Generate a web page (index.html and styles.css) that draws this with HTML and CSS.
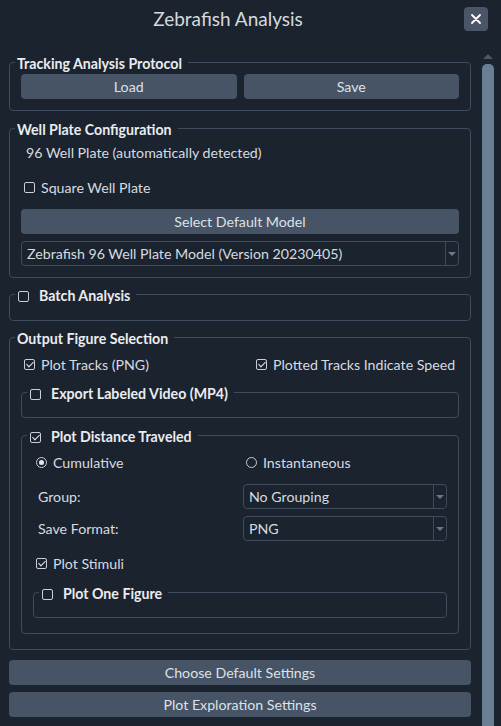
FILE: index.html
```html
<!DOCTYPE html>
<html lang="en">
<head>
  <meta charset="UTF-8">
  <meta name="viewport" content="width=device-width, initial-scale=1.0">
  <title>Zebrafish Analysis</title>
  <link rel="stylesheet" href="styles.css">
</head>
<body>
  <div class="window">
    <header class="titlebar">
      <h1>Zebrafish Analysis</h1>
      <button class="close" type="button" aria-label="Close">
        <svg width="10" height="10" viewBox="0 0 10 10"><path d="M1 1L9 9M9 1L1 9" stroke="#ffffff" stroke-width="1.8" stroke-linecap="round"/></svg>
      </button>
    </header>

    <div class="body">
      <main class="panel">
        <fieldset class="group g-protocol">
          <legend>Tracking Analysis Protocol</legend>
          <div class="btn-row">
            <button class="btn" type="button">Load</button>
            <button class="btn" type="button">Save</button>
          </div>
        </fieldset>

        <fieldset class="group g-plate">
          <legend>Well Plate Configuration</legend>
          <div class="note">96 Well Plate (automatically detected)</div>
          <label class="opt opt-square"><span class="check"></span>Square Well Plate</label>
          <button class="btn btn-wide" type="button">Select Default Model</button>
          <div class="combo combo-model">
            <span class="value">Zebrafish 96 Well Plate Model (Version 20230405)</span>
            <span class="drop"></span>
          </div>
        </fieldset>

        <fieldset class="group g-empty">
          <legend class="legend-check"><span class="check"></span>Batch Analysis</legend>
        </fieldset>

        <fieldset class="group g-output">
          <legend>Output Figure Selection</legend>
          <div class="pair">
            <label class="opt"><span class="check on"></span>Plot Tracks (PNG)</label>
            <label class="opt"><span class="check on"></span>Plotted Tracks Indicate Speed</label>
          </div>

          <fieldset class="group sub g-empty g-video">
            <legend class="legend-check"><span class="check"></span>Export Labeled Video (MP4)</legend>
          </fieldset>

          <fieldset class="group sub g-distance">
            <legend class="legend-check"><span class="check on"></span>Plot Distance Traveled</legend>
            <div class="form-grid">
              <label class="opt"><span class="radio on"></span>Cumulative</label>
              <label class="opt"><span class="radio"></span>Instantaneous</label>

              <span class="field-label row-group">Group:</span>
              <div class="combo row-group"><span class="value">No Grouping</span><span class="drop"></span></div>

              <span class="field-label row-format">Save Format:</span>
              <div class="combo row-format"><span class="value">PNG</span><span class="drop"></span></div>
            </div>
            <label class="opt opt-stimuli"><span class="check on"></span>Plot Stimuli</label>

            <fieldset class="group sub g-empty g-one">
              <legend class="legend-check"><span class="check"></span>Plot One Figure</legend>
            </fieldset>
          </fieldset>
        </fieldset>

        <button class="btn btn-full btn-first" type="button">Choose Default Settings</button>
        <button class="btn btn-full" type="button">Plot Exploration Settings</button>
      </main>

      <div class="scrollbar">
        <span class="arrow"></span>
        <span class="thumb"></span>
      </div>
    </div>
  </div>
</body>
</html>
```

FILE: styles.css
```css
* {
  box-sizing: border-box;
}

body {
  margin: 0;
  background-color: #1b232e;
  color: #d6dbe1;
  font-family: Lato, "Liberation Sans", sans-serif;
  font-size: 14.2px;
}

.window {
  width: 501px;
  height: 726px;
  overflow: hidden;
}

/* title bar */
.titlebar {
  height: 40px;
  display: flex;
  align-items: flex-start;
}

.titlebar h1 {
  flex: 1;
  margin: 0;
  padding-top: 7px;
  text-align: center;
  font-size: 19px;
  font-weight: normal;
  line-height: 24px;
  color: #d4d9df;
}

.close {
  width: 24px;
  height: 24px;
  margin: 7px 13px 0 8px;
  border: none;
  border-radius: 4px;
  background-color: #4a5667;
  display: flex;
  align-items: center;
  justify-content: center;
  padding: 0;
}

/* body + scrollbar */
.body {
  display: flex;
}

.panel {
  width: 471px;
  padding: 12px 0 0 9px;
}

.scrollbar {
  width: 12px;
  margin-left: 11px;
  padding-top: 14px;
  display: flex;
  flex-direction: column;
  align-items: center;
}

.arrow {
  width: 0;
  height: 0;
  border-left: 5px solid transparent;
  border-right: 5px solid transparent;
  border-bottom: 5px solid #4a5869;
}

.thumb {
  width: 12px;
  height: 700px;
  margin-top: 5px;
  border-radius: 5px 5px 0 0;
  background-color: #687f96;
}

/* group boxes */
.group {
  margin: 0;
  border: 1px solid #3e4b5c;
  border-radius: 4px;
  padding: 2px 11px 11px 11px;
  min-width: 0;
}

.group legend {
  margin-left: -6px;
  padding: 4px 6px 0 2px;
  font-weight: bold;
  line-height: 16px;
  color: #e9ecf0;
}

.g-plate {
  margin-top: 7px;
  padding-top: 5px;
}

.g-empty {
  margin-top: 6px;
  padding: 0 11px 16px 11px;
}

.g-output {
  margin-top: 6px;
  padding-top: 7px;
  padding-bottom: 15px;
}

.legend-check {
  display: flex;
  align-items: center;
}

.legend-check .check {
  margin: 0 10px 0 1px;
}

.sub.g-video {
  margin-top: 8px;
  padding-bottom: 15px;
}

.g-distance {
  margin-top: 7px;
  padding-top: 7px;
  padding-bottom: 15px;
}

.sub.g-one {
  margin-top: 9px;
  padding-bottom: 15px;
}

/* buttons */
.btn {
  height: 25px;
  border: none;
  border-radius: 4px;
  background-color: #475466;
  color: #dde1e6;
  font-family: inherit;
  font-size: 14.2px;
  padding: 0;
}

.btn-row {
  display: grid;
  grid-template-columns: 1fr 1fr;
  gap: 7px;
}

.btn-wide {
  display: block;
  width: 100%;
  margin-top: 12px;
}

.btn-full {
  display: block;
  width: 462px;
  margin-top: 7px;
}

.btn-first {
  margin-top: 10px;
}

/* rows */
.note {
  line-height: 20px;
  padding-left: 5px;
}

.opt {
  display: flex;
  align-items: center;
  height: 20px;
}

.opt-square {
  margin-top: 14px;
}

.opt-stimuli {
  margin-top: 12px;
}

.pair {
  display: grid;
  grid-template-columns: 232px 1fr;
}

.check {
  width: 11px;
  height: 11px;
  flex: none;
  margin: 0 6px 0 3px;
  border: 1px solid #c9cfd7;
  border-radius: 2px;
  display: inline-flex;
  align-items: center;
  justify-content: center;
}

.check.on::after {
  content: "";
  width: 3px;
  height: 6px;
  margin-top: -2px;
  border: solid #e4e8ec;
  border-width: 0 1.6px 1.6px 0;
  transform: rotate(45deg);
}

.radio {
  width: 11px;
  height: 11px;
  flex: none;
  margin: 0 6px 0 3px;
  border: 1px solid #c9cfd7;
  border-radius: 50%;
  display: inline-flex;
  align-items: center;
  justify-content: center;
}

.radio.on::after {
  content: "";
  width: 5px;
  height: 5px;
  border-radius: 50%;
  background-color: #e4e8ec;
}

.form-grid {
  display: grid;
  grid-template-columns: 210px 1fr;
  align-items: center;
}

.field-label {
  padding-left: 5px;
}

.row-group {
  margin-top: 12px;
}

.row-format {
  margin-top: 7px;
}

/* combo boxes */
.combo {
  height: 25px;
  display: flex;
  border: 1px solid #3e4b5c;
  border-radius: 4px;
}

.combo-model {
  margin-top: 7px;
}

.combo .value {
  flex: 1;
  padding-left: 5px;
  line-height: 23px;
  white-space: nowrap;
  overflow: hidden;
}

.combo .drop {
  width: 13px;
  border-left: 1px solid #3e4b5c;
  display: flex;
  align-items: center;
  justify-content: center;
}

.combo .drop::after {
  content: "";
  border-left: 4px solid transparent;
  border-right: 4px solid transparent;
  border-top: 4px solid #6c7887;
}
```
